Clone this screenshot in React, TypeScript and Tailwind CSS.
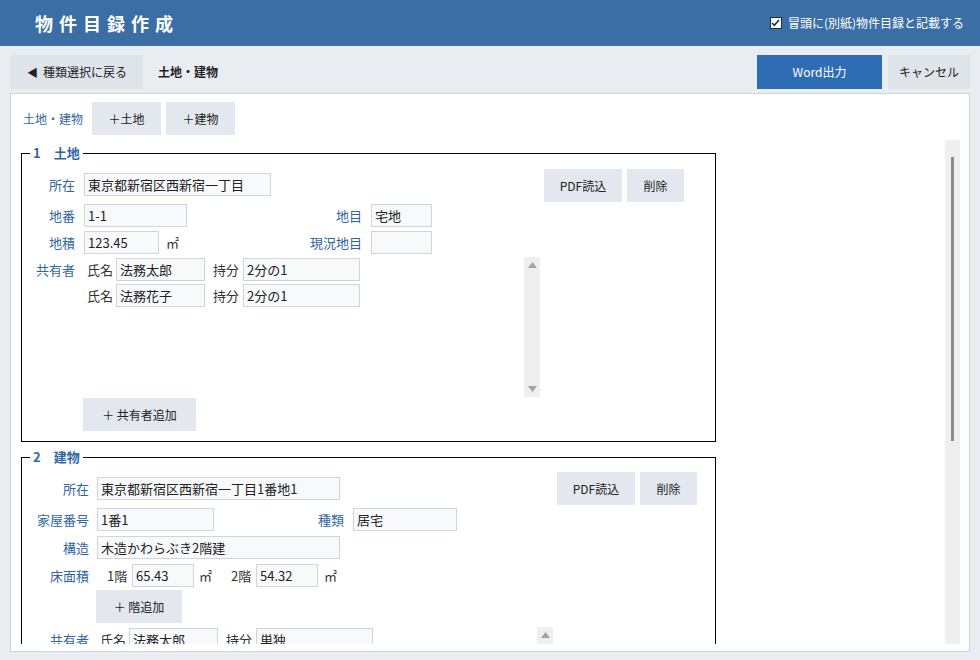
import type { ReactNode } from "react";

const labelCls = "text-[13px] leading-[23px] text-[#3166a3] text-right shrink-0";
const btnCls =
  "h-[33px] shrink-0 bg-[#e3e8ee] text-[12px] text-[#222] flex items-center justify-center";

function Field({ value, className }: { value?: string; className: string }) {
  return (
    <input
      readOnly
      defaultValue={value}
      className={`h-[23px] shrink-0 border border-[#cdd5de] bg-[#f7f9fb] px-[3px] text-[13px] text-[#222] outline-none ${className}`}
    />
  );
}

function Label({ children, className }: { children: ReactNode; className: string }) {
  return <span className={`${labelCls} ${className}`}>{children}</span>;
}

function OwnerRow({ name, share }: { name: string; share: string }) {
  return (
    <div className="flex items-center text-[13px] text-[#333]">
      <span className="ml-[3px] w-[29px] shrink-0">氏名</span>
      <Field value={name} className="w-[89px]" />
      <span className="ml-[8px] w-[30px] shrink-0">持分</span>
      <Field value={share} className="w-[117px]" />
    </div>
  );
}

// narrow scrollbar beside the co-owner list
function ListScrollbar() {
  return (
    <div className="flex h-full w-[16px] shrink-0 flex-col items-center justify-between bg-[#efefef] py-[5px] text-[#a3a3a3]">
      <svg width="9" height="6" viewBox="0 0 9 6">
        <path d="M4.5 0L9 6H0z" fill="currentColor" />
      </svg>
      <svg width="9" height="6" viewBox="0 0 9 6">
        <path d="M0 0h9L4.5 6z" fill="currentColor" />
      </svg>
    </div>
  );
}

function Legend({ children }: { children: ReactNode }) {
  return (
    <legend className="ml-[8px] px-[3px] text-[13px] font-bold leading-[18px] text-[#3166a3]">
      {children}
    </legend>
  );
}

function SideButtons() {
  return (
    <div className="ml-[4px] flex gap-[5px]">
      <button className={`${btnCls} w-[78px]`}>PDF読込</button>
      <button className={`${btnCls} w-[57px]`}>削除</button>
    </div>
  );
}

function LandSection() {
  return (
    <fieldset className="border border-black pb-[10px]">
      <Legend>1　土地</Legend>
      <div className="flex pt-[7px]">
        <div className="mt-[4px] w-[518px]">
          <div className="flex items-center">
            <Label className="w-[53px]">所在</Label>
            <Field value="東京都新宿区西新宿一丁目" className="ml-[9px] w-[187px]" />
          </div>
          <div className="mt-[8px] flex items-center">
            <div className="flex w-[260px] items-center">
              <Label className="w-[53px]">地番</Label>
              <Field value="1-1" className="ml-[9px] w-[103px]" />
            </div>
            <Label className="w-[80px]">地目</Label>
            <Field value="宅地" className="ml-[9px] w-[61px]" />
          </div>
          <div className="mt-[4px] flex items-center">
            <div className="flex w-[260px] items-center">
              <Label className="w-[53px]">地積</Label>
              <Field value="123.45" className="ml-[9px] w-[75px]" />
              <span className="ml-[7px] text-[13px] text-[#333]">㎡</span>
            </div>
            <Label className="w-[80px]">現況地目</Label>
            <Field className="ml-[9px] w-[61px]" />
          </div>
          <div className="mt-[3px] flex">
            <Label className="mt-[1px] w-[53px]">共有者</Label>
            <div className="ml-[9px] flex h-[140px] flex-1">
              <div className="flex flex-1 flex-col gap-[3px] pt-[1px]">
                <OwnerRow name="法務太郎" share="2分の1" />
                <OwnerRow name="法務花子" share="2分の1" />
              </div>
              <ListScrollbar />
            </div>
          </div>
          <button className={`${btnCls} ml-[61px] mt-[1px] w-[113px]`}>＋ 共有者追加</button>
        </div>
        <SideButtons />
      </div>
    </fieldset>
  );
}

function BuildingSection() {
  return (
    <fieldset className="mt-[6px] border border-black pb-[8px]">
      <Legend>2　建物</Legend>
      <div className="flex pt-[6px]">
        <div className="mt-[5px] w-[531px]">
          <div className="flex items-center">
            <Label className="w-[67px]">所在</Label>
            <Field value="東京都新宿区西新宿一丁目1番地1" className="ml-[8px] w-[243px]" />
          </div>
          <div className="mt-[8px] flex items-center">
            <div className="flex w-[242px] items-center">
              <Label className="w-[67px]">家屋番号</Label>
              <Field value="1番1" className="ml-[8px] w-[117px]" />
            </div>
            <Label className="w-[80px]">種類</Label>
            <Field value="居宅" className="ml-[9px] w-[104px]" />
          </div>
          <div className="mt-[5px] flex items-center">
            <Label className="w-[67px]">構造</Label>
            <Field value="木造かわらぶき2階建" className="ml-[8px] w-[243px]" />
          </div>
          <div className="mt-[5px] flex items-center text-[13px] text-[#333]">
            <Label className="w-[67px]">床面積</Label>
            <span className="ml-[18px] w-[25px] shrink-0">1階</span>
            <Field value="65.43" className="w-[62px]" />
            <span className="ml-[5px] w-[32px] shrink-0">㎡</span>
            <span className="w-[25px] shrink-0">2階</span>
            <Field value="54.32" className="w-[62px]" />
            <span className="ml-[6px]">㎡</span>
          </div>
          <button className={`${btnCls} ml-[74px] mt-[3px] w-[86px]`}>＋ 階追加</button>
          <div className="mt-[4px] flex">
            <Label className="mt-[1px] w-[67px]">共有者</Label>
            <div className="ml-[8px] flex h-[140px] w-[456px]">
              <div className="flex flex-1 flex-col gap-[3px] pt-[1px]">
                <OwnerRow name="法務太郎" share="単独" />
              </div>
              <ListScrollbar />
            </div>
          </div>
        </div>
        <SideButtons />
      </div>
    </fieldset>
  );
}

export default function App() {
  return (
    <div className="h-[660px] w-[980px] overflow-hidden bg-[#e9edf2] font-['Noto_Sans_CJK_JP','Noto_Sans',sans-serif] text-[#222]">
      <header className="flex h-[46px] items-center justify-between bg-[#3b6ea5] pl-[35px] pr-[16px] text-white">
        <h1 className="text-[18px] font-bold tracking-[6px]">物件目録作成</h1>
        <label className="flex items-center gap-[6px] text-[12px]">
          <span className="flex h-[12px] w-[12px] items-center justify-center border border-[#1d2f4a] bg-white">
            <svg width="9" height="8" viewBox="0 0 9 8">
              <path d="M1 4l2.3 2.4L8 1" fill="none" stroke="#1d2f4a" strokeWidth="1.6" />
            </svg>
          </span>
          冒頭に(別紙)物件目録と記載する
        </label>
      </header>

      <div className="flex h-[47px] items-start px-[10px] pt-[9px] text-[12px]">
        <button className="flex h-[34px] w-[133px] items-center gap-[5px] bg-[#dfe4ea] pl-[17px] text-[#222]">
          <span className="text-[11px]">◀</span>種類選択に戻る
        </button>
        <span className="ml-[15px] flex h-[34px] items-center font-bold text-[#222]">土地・建物</span>
        <button className="ml-auto h-[34px] w-[125px] bg-[#2e6db4] text-white">Word出力</button>
        <button className="ml-[6px] h-[34px] w-[82px] bg-[#dfe4ea] text-[#222]">キャンセル</button>
      </div>

      <main className="mx-[10px] border border-[#cdd3da] bg-white pb-[7px] pt-[8px]">
        <div className="flex items-center pl-[12px]">
          <span className="w-[69px] text-[12px] text-[#3166a3]">土地・建物</span>
          <button className={`${btnCls} w-[69px]`}>＋土地</button>
          <button className={`${btnCls} ml-[5px] w-[69px]`}>＋建物</button>
        </div>

        <div className="mt-[5px] flex h-[504px] pl-[10px] pr-[9px]">
          <div className="h-full w-[695px] overflow-hidden pt-[4px]">
            <LandSection />
            <BuildingSection />
          </div>
          <div className="ml-auto flex h-full w-[15px] flex-col items-center bg-[#efefef] pt-[17px]">
            <div className="h-[284px] w-[3px] bg-[#8c8c8c]" />
          </div>
        </div>
      </main>
    </div>
  );
}
